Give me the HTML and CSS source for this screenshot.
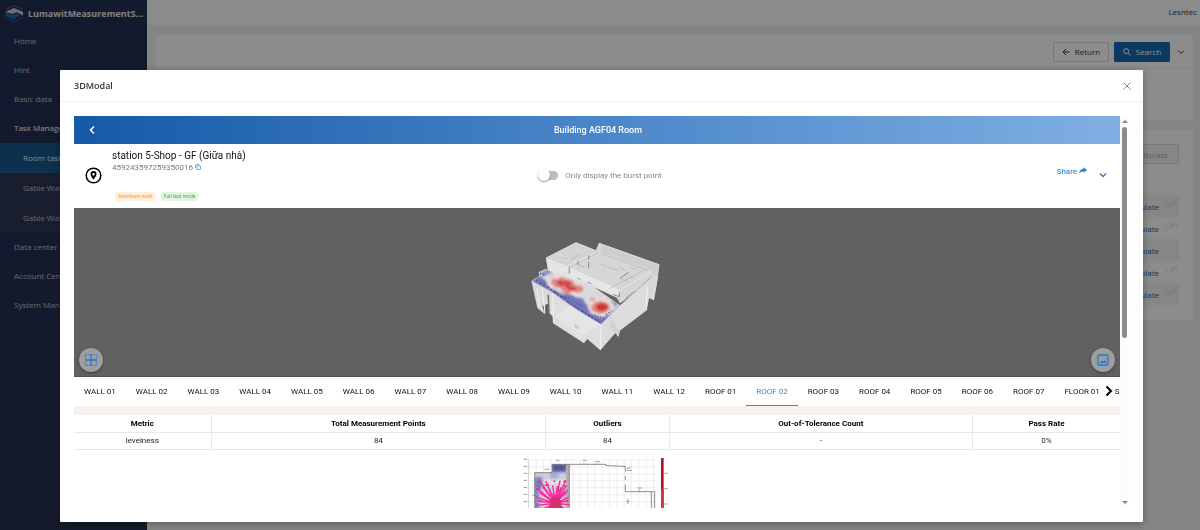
FILE: index.html
```html
<!DOCTYPE html>
<html lang="en">
<head>
    <meta charset="utf-8">
    <title>LumawitMeasurementSystem</title>
    <link rel="stylesheet" href="styles.css">
</head>
<body>
<div class="layout">
    <aside class="sidebar">
        <div class="logo">
            <svg width="20" height="18" viewBox="0 0 60 54">
                <path d="M3 15 L29 2 L57 13" fill="none" stroke="#5d6b88" stroke-width="3"/>
                <path d="M4 20 L30 9 L57 20 V32 L38 22 L24 27 Z" fill="#c8c9cb"/>
                <path d="M4 22 L24 30 L38 26 L48 31 L28 42 L4 32 Z" fill="#1671b8"/>
                <path d="M3 38 L29 51 L57 38" fill="none" stroke="#27578c" stroke-width="3"/>
            </svg>
            <span>LumawitMeasurementS...</span>
        </div>
        <nav class="menu">
            <a href="#">Home</a>
            <a href="#">Hint</a>
            <a href="#">Basic data</a>
            <a href="#" class="open">Task Management</a>
            <div class="submenu">
                <a href="#" class="active">Room task</a>
                <a href="#">Gable Wall task</a>
                <a href="#">Gable Wall data</a>
            </div>
            <a href="#">Data center</a>
            <a href="#">Account Center</a>
            <a href="#">System Management</a>
        </nav>
    </aside>
    <div class="main">
        <header class="topbar">Lesntec</header>
        <section class="card search-card">
            <div class="toolbar">
                <button type="button" class="btn">
                    <svg width="8" height="8" viewBox="0 0 8 8"><path d="M7.5 4H1M4 1L1 4l3 3" fill="none" stroke="currentColor"/></svg>
                    Return
                </button>
                <button type="button" class="btn primary">
                    <svg width="8" height="8" viewBox="0 0 8 8"><path d="M5.2 5.2L7.6 7.6" stroke="currentColor"/><circle cx="3.2" cy="3.2" r="2.5" fill="none" stroke="currentColor"/></svg>
                    Search
                </button>
                <button type="button" class="icon-btn" aria-label="Expand">
                    <svg width="8" height="8" viewBox="0 0 8 8"><path d="M1 2.5l3 3 3-3" fill="none" stroke="currentColor"/></svg>
                </button>
            </div>
        </section>
        <section class="card list-card">
            <button type="button" class="btn" disabled>Calculate</button>
            <ul class="tasks">
                <li><a href="#">Calculate</a><i>Les</i></li>
                <li><a href="#">Calculate</a><i>Les</i></li>
                <li><a href="#">Calculate</a></li>
                <li><a href="#">Calculate</a><i>Les</i></li>
                <li><a href="#">Calculate</a><i>Les</i></li>
            </ul>
        </section>
    </div>
</div>

<div class="mask">
    <div class="modal" role="dialog" aria-labelledby="modal-title">
        <div class="modal-header">
            <h2 id="modal-title">3DModal</h2>
            <button type="button" class="icon-btn close" aria-label="Close">
                <svg width="8" height="8" viewBox="0 0 8 8"><path d="M.5.5l7 7M7.5.5l-7 7" stroke="currentColor"/></svg>
            </button>
        </div>
        <div class="modal-body">
            <div class="content">
                <div class="room-bar">
                    <button type="button" class="icon-btn" aria-label="Back">
                        <svg width="8" height="10" viewBox="0 0 8 10"><path d="M6 1.5L2.5 5 6 8.5" fill="none" stroke="currentColor" stroke-width="1.5"/></svg>
                    </button>
                    <h3>Building AGF04 Room</h3>
                </div>

                <div class="info">
                    <div class="station">
                        <svg width="17" height="17" viewBox="0 0 17 17">
                            <circle cx="8.5" cy="8.5" r="7.3" fill="none" stroke="#000" stroke-width="1.5"/>
                            <path d="M8.5 4a3 3 0 0 0-3 3c0 2.2 3 5.6 3 5.6s3-3.4 3-5.6a3 3 0 0 0-3-3z"/>
                            <circle cx="8.5" cy="7.2" r="1.2" fill="#fff"/>
                        </svg>
                        <div>
                            <div class="name">station 5-Shop - GF (Giữa nhà)</div>
                            <div class="code">459243597259350016
                                <svg width="6" height="6" viewBox="0 0 6 6" fill="none" stroke="#4a90d9" stroke-width=".8"><rect x="1.8" y="1.8" width="3.7" height="3.7" rx=".6"/><path d="M4.2.5H1.2a.7.7 0 0 0-.7.7v3"/></svg>
                            </div>
                            <div class="tags"><span class="tag orange">Aluminum work</span><span class="tag green">Full test mode</span></div>
                        </div>
                    </div>
                    <label class="switch"><input type="checkbox">Only display the burst point</label>
                    <div class="actions">
                        <a href="#">Share
                            <svg width="8" height="7" viewBox="0 0 8 7"><path d="M4.5.3L7.8 3 4.5 5.7V4.4C3 4.3 1.5 4.8.3 6.2.4 3.7 2 1.9 4.5 1.7z" fill="currentColor"/></svg>
                        </a>
                        <button type="button" class="icon-btn" aria-label="More">
                            <svg width="8" height="6" viewBox="0 0 8 6"><path d="M1 1.5l3 3 3-3" fill="none" stroke="currentColor" stroke-width="1.3"/></svg>
                        </button>
                    </div>
                </div>

                <div class="viewer">
                    <svg width="150" height="130" viewBox="6 -7 450 390">
                        <defs>
                            <pattern id="dots" width="11" height="11" patternUnits="userSpaceOnUse" patternTransform="rotate(28)">
                                <rect width="3" height="2" fill="#fff" opacity=".3"/>
                            </pattern>
                            <filter id="soft"><feGaussianBlur stdDeviation="3"/></filter>
                            <clipPath id="floor"><path d="M34 154L58 140 56 128 78 118 150 142 210 165 300 228 243 285 205 262 150 228 96 188 58 168z"/></clipPath>
                            <linearGradient id="wall" x1="0" y1="0" x2="1" y2="1">
                                <stop offset="0" stop-color="#d6d6d6"/><stop offset="1" stop-color="#e9e9e9"/>
                            </linearGradient>
                        </defs>
                        <!-- outer walls -->
                        <path d="M34 154L62 166 100 190 242 284 382 165 415 138 402 213 385 205 380 243 300 303 295 322 288 308 241 362 202 328 192 341 100 282 98 262 88 250 86 222 76 226 74 254 52 236z" fill="url(#wall)"/>
                        <path d="M242 284L300 228 400 142 380 243 300 303 295 322 288 308 241 362z" fill="#dcdcdc"/>
                        <path d="M100 190L242 284 241 362 202 328 192 341 100 282z" fill="#dedede"/>
                        <path d="M103 262L150 228 243 285 180 326z" fill="#e9e9e9" opacity=".6"/>
                        <path d="M270 258L298 305 295 322 268 290z" fill="#d3d3d3"/>
                        <path d="M51 176L58 235M66 172L75 252M98 192L100 280M243 286L241 362M382 168L378 240" stroke="#fafafa" stroke-width="2" fill="none"/>
                        <path d="M82 198L87 196 89 248 86 246zM66 226l6 6v16z" fill="#6d6d6d"/>
                        <path d="M300 303L384 238M388 150L362 222M100 264L192 322" stroke="#c8c8c8" fill="none"/>
                        <path d="M165 286l8 3 2 8-8-2z" fill="none" stroke="#aaa" stroke-width="2"/>
                        <!-- levelness heat map -->
                        <g clip-path="url(#floor)">
                            <rect x="30" y="110" width="280" height="180" fill="#d8d8de"/>
                            <g filter="url(#soft)">
                                <path d="M34 154L60 140 84 160 100 176 116 180 128 194 150 192 166 204 190 208 194 222 208 230 210 246 228 256 250 264 262 250 280 244 300 226 243 290 205 266 150 230 96 192z" fill="#6f73b4"/>
                                <path d="M60 130l25-12 10 12-25 12zM235 200l60 22-12 12-45-20z" fill="#8a8ec2"/>
                                <path d="M80 156l10-16 22-4 24 2 34 14 24 20-6 20-22 6-44-6-16-10-22-8z" fill="#e9dcda"/>
                                <path d="M202 232l12-22 30-8 28 12 12 18-14 22-26 10-30-10z" fill="#e9dcda"/>
                                <path d="M92 160l4-12 18 0 10-6 20 8 14 2 8 14 22 4 2 14-14 8-20-6-10 10-20-8-4-12-18-2z" fill="#de8683"/>
                                <path d="M212 234l10-14 20-6 22 8 8 14-14 14-20 4-20-8z" fill="#e08480"/>
                                <path d="M208 208l8-4 12 4-4 8-12 0z" fill="#e4a09c"/>
                                <path d="M86 142l8-5 10 3-6 6z" fill="#e8b8b4"/>
                                <path d="M108 158l12-6 10 4 14-2 10 8-2 8 16 4 2 8-16 4-14-8-6-10-12 4z" fill="#cf4441"/>
                                <path d="M226 234l8-10 16-2 14 8-4 10-16 6-10-4z" fill="#cb302e"/>
                            </g>
                            <path d="M48 154l30 14 28 22 44 30 52 36 40 24" fill="none" stroke="#4a50a0" stroke-width="4" stroke-dasharray="5 7 9 4"/>
                            <path d="M60 132l16 6M126 202l26 4M170 220l24 12M214 256l36 10M258 256l16-12" stroke="#5459a5" stroke-width="4" stroke-dasharray="4 5"/>
                            <rect x="30" y="110" width="280" height="180" fill="url(#dots)"/>
                        </g>
                        <!-- upper storey -->
                        <path d="M78 86L168 40 228 64 238 42 418 106 413 146 300 222 290 205 210 168 84 122z" fill="#dcdcdc" opacity=".94"/>
                        <path d="M78 86L168 40 228 64 140 112z" fill="#d3d3d3"/>
                        <path d="M146 118L240 70 394 126 294 186z" fill="#d6d6d6"/>
                        <path d="M238 42L418 106 414 136 238 70z" fill="#cecece"/>
                        <path d="M78 86L142 112 294 178 294 205 210 168 84 122z" fill="#e3e3e3"/>
                        <path d="M294 188L402 130 413 146 402 213 386 204 384 160 300 222z" fill="#d6d6d6" opacity=".75"/>
                        <path d="M78 86L168 40 228 64 238 42 418 106M80 100L146 128 296 194M146 116L240 70 394 126 294 186zM240 70V42M84 90L140 112 226 70M112 74l58 24" fill="none" stroke="#f0f0f0" stroke-width="2"/>
                        <path d="M148 114L236 70M242 72L386 124M268 178L376 120M150 92l30-16M126 82l18 7M170 104l24 10M242 104l14 6M262 112l32 12M298 114l16 7M332 114l20 8M298 146l28 12M330 142l14 6" fill="none" stroke="#a0a0a0" stroke-width="1.5"/>
                        <path d="M148 112v22M174 94v12M206 78v13M206 98v18M173 146l8 4M204 158l10 5M280 196l18 6 1-12M316 208l26-20M302 146l24-17" fill="none" stroke="#626262" stroke-width="2"/>
                        <path d="M342 190L396 140" stroke="#8a8a8a" stroke-width="2" stroke-dasharray="14 3"/>
                    </svg>
                    <button type="button" class="round left" aria-label="Grid">
                        <svg width="12" height="12" viewBox="0 0 12 12" fill="none" stroke="#2578cf"><path d="M6 .5v11M.5 6h11" stroke-width="1.3"/><rect x=".6" y=".6" width="10.8" height="10.8" stroke-dasharray="1.5 1"/></svg>
                    </button>
                    <button type="button" class="round right" aria-label="Picture">
                        <svg width="12" height="12" viewBox="0 0 12 12"><rect x="1" y="1" width="10" height="10" rx="1" fill="none" stroke="#2578cf" stroke-width="1.3"/><path d="M2.8 9l2-2.5 1.3 1.4 1.7-2.2L9.5 9z" fill="#2578cf"/></svg>
                    </button>
                </div>

                <div class="tabs" role="tablist">
                    <button type="button" role="tab">WALL 01</button>
                    <button type="button" role="tab">WALL 02</button>
                    <button type="button" role="tab">WALL 03</button>
                    <button type="button" role="tab">WALL 04</button>
                    <button type="button" role="tab">WALL 05</button>
                    <button type="button" role="tab">WALL 06</button>
                    <button type="button" role="tab">WALL 07</button>
                    <button type="button" role="tab">WALL 08</button>
                    <button type="button" role="tab">WALL 09</button>
                    <button type="button" role="tab">WALL 10</button>
                    <button type="button" role="tab">WALL 11</button>
                    <button type="button" role="tab">WALL 12</button>
                    <button type="button" role="tab">ROOF 01</button>
                    <button type="button" role="tab" class="current" aria-selected="true">ROOF 02</button>
                    <button type="button" role="tab">ROOF 03</button>
                    <button type="button" role="tab">ROOF 04</button>
                    <button type="button" role="tab">ROOF 05</button>
                    <button type="button" role="tab">ROOF 06</button>
                    <button type="button" role="tab">ROOF 07</button>
                    <button type="button" role="tab">FLOOR 01</button>
                    <button type="button" role="tab" class="last">S</button>
                    <svg class="next" width="8" height="12" viewBox="0 0 8 12"><path d="M1.5 1.5L6 6l-4.5 4.5" fill="none" stroke="#000" stroke-width="2"/></svg>
                </div>

                <div class="result">
                    <table>
                        <colgroup><col class="c1"><col class="c2"><col class="c3"><col class="c4"><col class="c5"></colgroup>
                        <tr><th>Metric</th><th>Total Measurement Points</th><th>Outliers</th><th>Out-of-Tolerance Count</th><th>Pass Rate</th></tr>
                        <tr><td>levelness</td><td>84</td><td>84</td><td>-</td><td>0%</td></tr>
                    </table>
                </div>

                <div class="plan">
                    <svg width="150" height="100" viewBox="36 24 450 300">
                        <defs>
                            <pattern id="grid" x="55" y="28" width="22" height="21" patternUnits="userSpaceOnUse"><path d="M0 0H22M0 0V21" stroke="#cfcfcf" stroke-width="2" fill="none"/></pattern>
                            <pattern id="noise" width="13" height="11" patternUnits="userSpaceOnUse"><path d="M1 1h4v3H1zM8 6h3v3H8z" fill="#fff" opacity=".35"/><path d="M6 2h3v3H6zM1 7h4v2H1z" fill="#555fb0" opacity=".3"/></pattern>
                            <filter id="blur"><feGaussianBlur stdDeviation="4"/></filter>
                            <clipPath id="area"><path d="M74 68H126V43H178V324H74z"/></clipPath>
                        </defs>
                        <rect x="55" y="28" width="380" height="296" fill="url(#grid)"/>
                        <path d="M41 28h10M41 49h10M41 70h10M41 91h10M41 112h10M41 133h10M41 155h10" stroke="#999" stroke-width="3"/>
                        <path d="M55 26V324" stroke="#888"/>
                        <g clip-path="url(#area)">
                            <rect x="74" y="43" width="104" height="280" fill="#cdcddd"/>
                            <g filter="url(#blur)">
                                <path d="M126 40h44v26h-44z" fill="#444c9c"/>
                                <path d="M74 82h22v30l-10 15v60H74z" fill="#6d72b0"/>
                                <path d="M120 68h26v20h-26zM155 115h20v30h-20z" fill="#a6a9cc"/>
                                <path d="M105 88h62v20h-62z" fill="#e5e0e2"/>
                            </g>
                            <rect x="74" y="43" width="104" height="280" fill="url(#noise)"/>
                            <path d="M168 48h9v276h-9z" fill="#b5afb4"/>
                        </g>
                        <g stroke="#ff2599" stroke-width="4" fill="none">
                            <path d="M136 160L88 91M136 160L108 94M136 160L128 106M136 160L142 108M136 160L166 94M136 160L150 92M136 160L82 117M136 160L90 128M136 160L80 142M136 160L84 153M136 160L80 166M136 160L168 108M136 160L174 120M136 160L162 128M136 160L176 142M136 160L170 153M136 160L178 164M136 160L116 116M136 160L98 110M136 160L154 112M136 160L84 184M136 160L104 186M136 160L164 184M136 160L178 184"/>
                            <path d="M122 132l28 8-30 12 34 14-40 4M104 106h12M80 116h8M160 108h10"/>
                        </g>
                        <path d="M122 150l8-12 14 4 10 12-2 14 8 10h-44l4-14z" fill="#d0356f"/>
                        <g fill="#ff2599"><circle cx="112" cy="105" r="4"/><circle cx="133" cy="94" r="3"/><circle cx="165" cy="94" r="4"/><circle cx="96" cy="130" r="4"/><circle cx="165" cy="129" r="4"/><circle cx="92" cy="153" r="4"/><circle cx="171" cy="153" r="4"/><circle cx="145" cy="121" r="5"/><circle cx="82" cy="117" r="3"/></g>
                        <path d="M74 68H126V43H288V47L346 49V65M346 78v12M346 104V125H434V324M424 125V324M178 43v132M74 68V324" fill="none" stroke="#555" stroke-width="2"/>
                        <path d="M138 31h10M218 31h12M256 35h14M104 58h14M382 114h14M350 61h16M68 136h10M348 154h10M354 146v16M222 38v5M262 40v5M388 119v5M350 56l12-4" stroke="#777" stroke-width="2"/>
                        <path d="M453 24h8v300h-8z" fill="#b4141b"/>
                        <path d="M453 118h8v206h-8z" fill="#c43b3b"/>
                        <path d="M462 70h12M462 116h12M462 162h12" stroke="#888" stroke-width="2"/>
                    </svg>
                </div>
            </div>
            <div class="scrollbar">
                <span class="up"></span>
                <span class="thumb"></span>
                <span class="down"></span>
            </div>
        </div>
    </div>
</div>
</body>
</html>
```

FILE: styles.css
```css
* {
    box-sizing: border-box;
}

body {
    margin: 0;
    background: #f0f2f5;
    font-family: "Open Sans", "Noto Sans", sans-serif;
    font-size: 8px;
    color: #333;
    overflow: hidden;
}

a {
    text-decoration: none;
    color: inherit;
}

button {
    font: inherit;
    color: inherit;
    cursor: pointer;
}

svg {
    flex-shrink: 0;
}

.layout {
    display: flex;
    min-height: 100vh;
}

/* sidebar */
.sidebar {
    width: 147px;
    flex-shrink: 0;
    background: #263052;
    color: #bcc0ca;
}

.logo {
    display: flex;
    align-items: center;
    gap: 4px;
    height: 27px;
    padding-left: 4px;
    font-size: 9px;
    font-weight: 700;
    color: #e8e8e8;
}

.menu a {
    display: block;
    height: 29px;
    line-height: 28px;
    padding-left: 14px;
}

.menu a.open {
    color: #fff;
}

.submenu {
    background: #2e3856;
}

.menu .submenu a {
    height: 30px;
    line-height: 30px;
    padding-left: 23px;
}

.menu .submenu a.active {
    background: #17588e;
    color: #e8edf3;
}

/* page behind the dialog */
.main {
    flex: 1;
}

.topbar {
    height: 25px;
    line-height: 24px;
    padding-right: 3px;
    text-align: right;
    background: #fff;
}

.card {
    margin: 10px 7px 0 9px;
    background: #fff;
    border-radius: 1px;
}

.search-card {
    height: 85px;
}

.toolbar {
    display: flex;
    justify-content: flex-end;
    align-items: center;
    gap: 5px;
    height: 34px;
    padding-right: 6px;
    border-bottom: 1px solid #eee;
}

.btn {
    display: flex;
    align-items: center;
    justify-content: center;
    gap: 5px;
    width: 56px;
    height: 20px;
    padding: 0;
    background: #fff;
    border: 1px solid #d9d9d9;
    border-radius: 1px;
}

.btn.primary {
    background: #1468b1;
    border-color: #1468b1;
    color: #fff;
}

.btn:disabled {
    background: #f5f5f5;
    color: #aaa;
}

.icon-btn {
    display: flex;
    padding: 0 2px;
    border: 0;
    background: none;
}

.list-card {
    height: 190px;
    padding: 14px 14px 0;
}

.list-card .btn {
    margin-left: auto;
}

.tasks {
    list-style: none;
    margin: 31px 0 0;
    padding: 0;
    color: #1468b1;
}

.tasks li {
    display: flex;
    justify-content: flex-end;
    align-items: center;
    height: 22px;
    padding-right: 20px;
    position: relative;
}

.tasks li:nth-child(odd) {
    background: #f5f5f5;
}

.tasks i {
    position: absolute;
    right: 2px;
    top: 2px;
    font-style: normal;
    color: #dcdcdc;
    transform: rotate(-15deg);
}

/* dialog */
.mask {
    position: fixed;
    inset: 0;
    padding: 70px 57px 8px 60px;
    background: rgba(0, 0, 0, .45);
}

.modal {
    display: flex;
    flex-direction: column;
    height: 100%;
    background: #fff;
    border-radius: 1px;
    box-shadow: 0 2px 8px rgba(0, 0, 0, .3);
}

.modal-header {
    display: flex;
    justify-content: space-between;
    align-items: center;
    height: 32px;
    padding: 0 10px 0 14px;
    border-bottom: 1px solid #f0f0f0;
}

.modal-header h2 {
    margin: 0;
    font-size: 9px;
    font-weight: 600;
}

.close {
    color: #888;
}

.modal-body {
    flex: 1;
    min-height: 0;
    display: flex;
    padding: 14px;
    font-family: Roboto, "Noto Sans", sans-serif;
}

.content {
    flex: 1;
    min-width: 0;
    overflow: hidden;
}

.room-bar {
    display: grid;
    grid-template-columns: 1fr auto 1fr;
    align-items: center;
    height: 28px;
    padding: 0 10px 0 12px;
    color: #fff;
    background: linear-gradient(to right, #1559a7, #4a86c8 50%, #80afe3);
}

.room-bar h3 {
    margin: 0;
    font-size: 9px;
    font-weight: 500;
}

.info {
    display: grid;
    grid-template-columns: 1fr auto 1fr;
    align-items: center;
    height: 64px;
    padding: 0 11px 2px;
}

.station {
    display: flex;
    align-items: center;
    gap: 10px;
    line-height: 12px;
}

.name {
    font-size: 10px;
    color: #111;
}

.code {
    color: #777;
}

.tags {
    display: flex;
    gap: 5px;
    padding: 18px 0 0 3px;
}

.tag {
    height: 9px;
    line-height: 9px;
    padding: 0 3px;
    border-radius: 2px;
    font-size: 5px;
}

.orange {
    background: #ffefdc;
    color: #ff9a2e;
}

.green {
    background: #e2f3e3;
    color: #4fae55;
}

.switch {
    display: flex;
    align-items: center;
    gap: 7px;
    padding-left: 6px;
    color: #888;
}

.switch input {
    appearance: none;
    display: flex;
    align-items: center;
    width: 20px;
    height: 9px;
    margin: 0;
    border-radius: 5px;
    background: #bdbdbd;
}

.switch input::before {
    content: "";
    width: 12px;
    height: 12px;
    border-radius: 50%;
    background: #fff;
    box-shadow: 0 1px 2px rgba(0, 0, 0, .4);
}

.actions {
    display: flex;
    justify-content: flex-end;
    align-items: center;
    gap: 10px;
    color: #2578cf;
}

.actions a {
    padding-bottom: 8px;
}

.viewer {
    position: relative;
    display: flex;
    justify-content: center;
    align-items: center;
    height: 169px;
    background: #616161;
    border-bottom: 1px solid #505050;
}

.round {
    position: absolute;
    bottom: 4px;
    display: flex;
    align-items: center;
    justify-content: center;
    width: 24px;
    height: 24px;
    padding: 0;
    border: 0;
    border-radius: 50%;
    background: #9e9e9e;
    box-shadow: 0 1px 3px rgba(0, 0, 0, .4);
}

.left {
    left: 5px;
}

.right {
    right: 5px;
}

/* surface tabs */
.tabs {
    position: relative;
    display: flex;
    height: 29px;
    overflow: hidden;
}

.tabs button {
    flex-shrink: 0;
    padding: 0 10px;
    border: 0;
    border-bottom: 1px solid transparent;
    background: none;
    color: #111;
}

.tabs .current {
    color: #3c85d2;
    border-color: #3c85d2;
}

.tabs .last {
    padding: 0 5px;
}

.next {
    position: absolute;
    right: 7px;
    top: 8px;
}

.result {
    padding-top: 9px;
    background: #f4f1ee;
}

table {
    width: 100%;
    table-layout: fixed;
    border-collapse: collapse;
    background: #fff;
    text-align: center;
    color: #222;
}

th, td {
    height: 17px;
    padding: 0;
    border-bottom: 1px solid #e8e8e8;
    border-right: 1px solid #e8e8e8;
}

th {
    color: #000;
}

th:last-child, td:last-child {
    border-right: 0;
}

.c1 { width: 13.1%; }
.c2 { width: 32%; }
.c3 { width: 11.8%; }
.c4 { width: 29%; }
.c5 { width: 14.1%; }

.plan {
    display: flex;
    justify-content: center;
    padding-top: 8px;
}

.scrollbar {
    display: flex;
    flex-direction: column;
    align-items: center;
    width: 9px;
    padding: 4px 0;
    background: #fcfcfc;
}

.up, .down {
    border: 3px solid transparent;
}

.up {
    border-top: 0;
    border-bottom-color: #858585;
}

.down {
    border-bottom: 0;
    border-top-color: #858585;
    margin-top: auto;
}

.thumb {
    width: 5px;
    height: 55%;
    margin-top: 4px;
    border-radius: 3px;
    background: #8b8b8b;
}
```
